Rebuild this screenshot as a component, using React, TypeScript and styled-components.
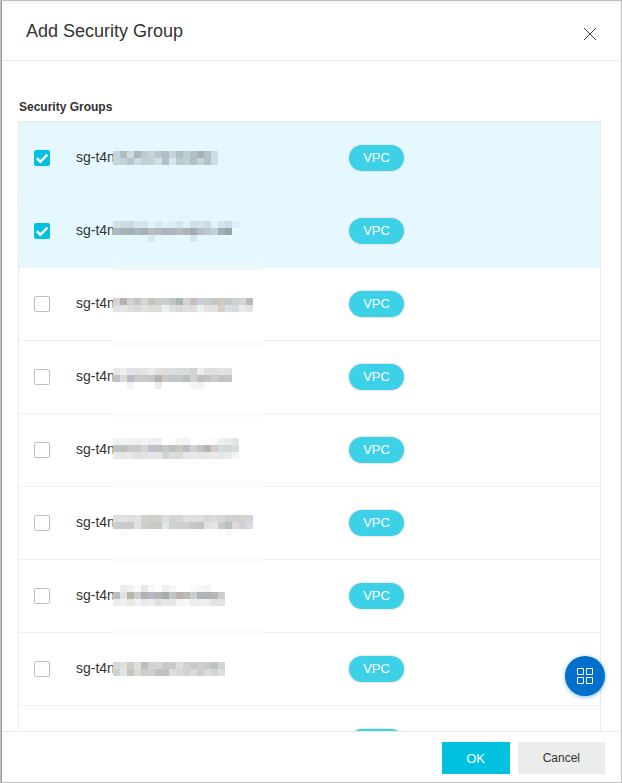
import React, { useState } from 'react';
import styled, { createGlobalStyle } from 'styled-components';

const GlobalStyle = createGlobalStyle`
  *, *::before, *::after { box-sizing: border-box; }
  body {
    margin: 0;
    background: #fff;
    color: #333;
    font-family: "Liberation Sans", Arial, Helvetica, sans-serif;
    font-size: 14px;
  }
`;

const Dialog = styled.section`
  display: flex;
  flex-direction: column;
  height: 100vh;
  background: #fff;
  border: 1px solid #c0c0c0;
  box-shadow: inset 1px 0 0 #9c9c9c, inset 0 2px 3px #f1f1f1;
  padding-left: 1px;
`;

const Header = styled.header`
  display: flex;
  align-items: center;
  justify-content: space-between;
  flex: none;
  height: 60px;
  padding: 0 21px 0 24px;
  border-bottom: 1px solid #ebebeb;
`;

const Title = styled.h1`
  margin: 0;
  font-size: 18px;
  line-height: 24px;
  font-weight: 400;
`;

const CloseButton = styled.button`
  display: flex;
  margin-top: 6px;
  padding: 0;
  border: 0;
  background: none;
  color: #444;
  cursor: pointer;
`;

const Body = styled.main`
  flex: 1;
  min-height: 0;
  overflow-y: auto;
  scrollbar-width: none;
  padding: 36px 20px 0 16px;
`;

const SectionTitle = styled.h2`
  margin: 0;
  padding: 0 1px 4px;
  font-size: 12px;
  line-height: 20px;
  font-weight: 700;
`;

const GroupTable = styled.table`
  width: 100%;
  table-layout: fixed;
  border: 1px solid #ebebeb;
  border-spacing: 0;
`;

const CheckColumn = styled.col`
  width: 57px;
`;

const NameColumn = styled.col`
  width: 47%;
`;

const Row = styled.tr<{ $selected: boolean }>`
  background: ${(p) => (p.$selected ? '#e5f8ff' : '#fff')};
`;

const Cell = styled.td`
  height: 73px;
  padding: 0;
  border-bottom: 1px solid #f2f2f2;
  vertical-align: middle;
`;

const CheckLabel = styled.label`
  position: relative;
  display: flex;
  width: 16px;
  margin-left: 15px;
`;

const CheckInput = styled.input`
  appearance: none;
  width: 16px;
  height: 16px;
  margin: 0;
  border: 1px solid #bfbfbf;
  border-radius: 2px;
  background: #fff;
  cursor: pointer;

  &:checked {
    border-color: #00c1de;
    background: #00c1de;
  }
`;

const Tick = styled.svg`
  position: absolute;
  inset: 0;
  pointer-events: none;
`;

const NameLine = styled.div`
  display: flex;
  align-items: center;
  height: 72px;
`;

const GroupId = styled.span`
  width: 37px;
  padding-bottom: 2px;
  white-space: nowrap;
  line-height: 20px;
`;

const Mosaic = styled.svg`
  position: relative;
  display: block;
  flex: none;
  overflow: visible;
  pointer-events: none;
`;

const Tag = styled.span`
  display: block;
  width: 55px;
  height: 26px;
  border-radius: 13px;
  background: #3dd1e7;
  box-shadow: 0 0 1px 1px #e4e8e8;
  color: #fff;
  font-size: 13px;
  line-height: 26px;
  text-align: center;
`;

const Footer = styled.footer`
  display: flex;
  flex: none;
  justify-content: flex-end;
  gap: 8px;
  padding: 10px 16px 8px;
  border-top: 1px solid #ebebeb;
`;

const ActionButton = styled.button<{ $primary?: boolean }>`
  min-width: 68px;
  height: 32px;
  padding: 0 ${(p) => (p.$primary ? '24px' : '25px')};
  border: 0;
  background: ${(p) => (p.$primary ? '#00c1de' : '#eaedec')};
  color: ${(p) => (p.$primary ? '#fff' : '#333')};
  font-family: inherit;
  font-size: ${(p) => (p.$primary ? '13px' : '12px')};
  cursor: pointer;
`;

const FloatingButton = styled.button`
  position: fixed;
  right: 17px;
  bottom: 87px;
  display: flex;
  align-items: center;
  justify-content: center;
  width: 40px;
  height: 40px;
  padding: 0;
  border: 0;
  border-radius: 50%;
  background: #0070cc;
  box-shadow: 0 1px 4px rgba(0, 112, 204, 0.5);
  color: #fff;
  cursor: pointer;
`;

type Mask = {
  top: number;
  lines: string[];
  band?: { y: number; color: string };
};

type Group = { id: string; selected: boolean; mask?: Mask };

const CELL = 7;

/* Each mask line lists one colour per tile; "-" leaves a tile empty. */
const groups: Group[] = [
  {
    id: 'sg-t4n',
    selected: true,
    mask: {
      top: 29,
      lines: [
        'c1d6de adbdc2 cbdce4 abb9be bdcbd1 c5d4d9 b7c8c8 b2bec8 c5d0d7 adc0c5 bccdd1 b1bfc6 a4b3b7 b2c4c4 cddde4',
        'c1d6de c2d3d6 b7c6cd cbdce2 c3d2d5 c3d2d5 cfe1e8 b3bfca d7e6ee b7cbcd bfd1d5 afbfc4 c3d4d9 b2c4c4 cddde4',
      ],
      band: { y: 71, color: '#e6f7fd' },
    },
  },
  {
    id: 'sg-t4n',
    selected: true,
    mask: {
      top: 26,
      lines: [
        'd1e2e8 cddce2 c9d9df d7e7ed d5e5eb e1f2f8 d7e8ee e0f1f7 dceef4 d3e6eb e0f3fa d0e0e5 d3e3e9 ccdce1 e0f3fb d3e4ea cddde3 dceef6',
        'a5bdca a9b3b6 a5b1b5 a7bac4 a8b1b2 b0c2c8 b0bcbd a6b5bf adb7b9 b1bdbf a9b6b9 a6abad abc0ca c0c6cd b9d5e1 a2b1b4 93a5a5',
        '- - - - - d7e8ee - - - - - d7e7ed',
      ],
      band: { y: 68, color: '#edf8fb' },
    },
  },
  {
    id: 'sg-t4n',
    selected: false,
    mask: {
      top: 30,
      lines: [
        'd0d4d7 b5afb1 d1d1d1 c3c3c8 d6d6d8 c3c4bf d0cbc7 c9ced3 c3c6c4 adb6b4 d4d4d5 c3bebb c9ced4 c9cdcd c3c7c7 d1c8c2 c5c9cb cdd1cf d0d5d6 babbb9',
        'dfe0e6 e3e4e3 dddddb d9dad9 e2e2e1 dfdddc e0dcdc e9f1f1 dfdfdf d7d8d7 dedfe1 e1dddd e8f1f0 e2e3e1 e1e1e2 d4cdc9 dadee3 d6dada e9e9e7 e4e4e5',
      ],
      band: { y: 72, color: '#fcfcfc' },
    },
  },
  {
    id: 'sg-t4n',
    selected: false,
    mask: {
      top: 27,
      lines: [
        'e7e8e8 efeee8 dfe2eb e0e0df e2e3e3 e9e9e8 e1e2dd dfdcd6 d8dddd dadbdd d9dada d1d2d1 edece7 dfdfde dbdfde e3e3e5 dfe0e4',
        'bdc4cb dfdbd4 b6bdc7 c8cbca c8c9c8 c5c7c4 afb4b0 cdc7bf bdc6c9 c2c8cb b8c0bd d5d1cc bdc2c1 c4c4c3 cbcecc c3c3c1 c4c7ca',
        '- - f4f4f5 - - - ebecea - - - - f5f5f5 eff3f3',
      ],
      band: { y: 69, color: '#fcfcfc' },
    },
  },
  {
    id: 'sg-t4n',
    selected: false,
    mask: {
      top: 24,
      lines: [
        'f2f2f2 f3f3f3 f1f2f1 eef0ef f2f3f3 f0f0f3 eff0f1 - - f4f4f4 f2f3f4 - - - fafafa eef1f0 e9ecea e3e5e6',
        'bac5cb bdc0bd c8cbc9 caccca d4d6d0 bfc2cc c0bcbf c4c9cc bcc1bf cbc7c1 b8bec4 cfd2d1 c1c4c1 b0b6b5 d4ccc8 d1dce0 d5d8d9 d8dcdc',
        'e8e9e9 e7e8e6 e8e8e8 e0e1e0 e1e2e1 e2e6e9 e3e5e7 d1d3d2 dededc d8dad9 e6e7ea edeae5 e6e6e8 e6e6ea eaeae8 e4e6e8 e6eaea f3f3f3',
      ],
      band: { y: 66, color: '#fcfcfc' },
    },
  },
  {
    id: 'sg-t4n',
    selected: false,
    mask: {
      top: 28,
      lines: [
        'dce0e2 e1e1e4 dededf e2e2e3 d1d2cf cdcdcb d3d0cc dbdce0 d0d4d5 d6d8d8 dfe0df dfdfdf dddfe0 d3d9d7 dcdadd d4d9d5 cdd1cd d1d2cf d5d2cb cdd5dd',
        'c8ced5 cacacd cacbca dfe0df cccecc cacac9 cac6c1 dfe7e8 ced1d0 cbd0cb cfcfcf c4c7c5 c2c4c2 dbe2df e4e3e6 c8cbc9 b8c0bb ddd9d6 d0d0d4 dadbe0',
        '- fafafa - - - - - - - - - - - - - - fafafa',
      ],
      band: { y: 70, color: '#fcfcfc' },
    },
  },
  {
    id: 'sg-t4n',
    selected: false,
    mask: {
      top: 25,
      lines: [
        '- ebebea f1f1f1 fcfcfa e8e8e8 f8f8f8 - efefec f7f7f7 - - fbfbfb f7f7f7 f2f3f3',
        'b7c0c6 dfe3e2 bab5af ccd0cd b4b3b1 b9b8c2 b1b7b4 a7adac c3c4c5 b9b4b2 bdbab0 c5cfcd b0b3bb abb4b6 b8b6b9 cecece',
        'ececf0 efefee e8e8e1 f0f0ef e6eaef ececed dfe1de e4e6e8 e4e6e9 f4f4f4 f9f9f8 ececed eeeeee f1ece9 e1e2e4 e1e4e6',
      ],
      band: { y: 67, color: '#fcfcfc' },
    },
  },
  {
    id: 'sg-t4n',
    selected: false,
    mask: {
      top: 29,
      lines: [
        'd3d8dc dfe1dd cccdca dfe0dd bdbfbb d2d3d7 d4d4d9 c7cac9 cbcaca dededf d0d1d3 c5c9c8 cbcecd c6c9c5 bfc2c0 d0d5d9',
        'ccd4d8 e3e6e4 c3c6c0 dadbd3 cdcdce ceced3 c0c2bf c0c2bf dcdddf d7d8d6 cfd5d6 d9dadd d0ccca d9dadc d4d5d4 dcdfe1',
      ],
    },
  },
  { id: 'sg-t4n', selected: false },
];

function RedactedTail({ mask }: { mask: Mask }) {
  return (
    <Mosaic width="149" height="72" viewBox="0 0 149 72" shapeRendering="crispEdges" aria-hidden="true">
      {mask.band && <rect x={0} y={mask.band.y} width={149} height={CELL} fill={mask.band.color} />}
      {mask.lines.map((line, r) =>
        line.split(' ').map((color, c) =>
          color === '-' ? null : (
            <rect
              key={`${r}-${c}`}
              x={c * CELL}
              y={mask.top + r * CELL}
              width={CELL}
              height={CELL}
              fill={`#${color}`}
            />
          ),
        ),
      )}
    </Mosaic>
  );
}

export default function App() {
  const [selected, setSelected] = useState(groups.map((g) => g.selected));
  const toggle = (index: number) =>
    setSelected((current) => current.map((value, i) => (i === index ? !value : value)));

  return (
    <>
      <GlobalStyle />
      <Dialog role="dialog" aria-labelledby="dialog-title">
        <Header>
          <Title id="dialog-title">Add Security Group</Title>
          <CloseButton type="button" aria-label="Close">
            <svg width="20" height="20" viewBox="0 0 20 20" fill="none" stroke="currentColor">
              <path d="M4 4 L16 16 M16 4 L4 16" />
            </svg>
          </CloseButton>
        </Header>
        <Body>
          <SectionTitle id="groups-title">Security Groups</SectionTitle>
          <GroupTable aria-labelledby="groups-title">
            <colgroup>
              <CheckColumn />
              <NameColumn />
              <col />
            </colgroup>
            <tbody>
              {groups.map((group, i) => (
                <Row key={i} $selected={selected[i]}>
                  <Cell>
                    <CheckLabel>
                      <CheckInput
                        type="checkbox"
                        checked={selected[i]}
                        onChange={() => toggle(i)}
                        aria-labelledby={`group-${i}`}
                      />
                      {selected[i] && (
                        <Tick width="16" height="16" viewBox="0 0 16 16" fill="none" stroke="#fff" strokeWidth="2.4">
                          <path d="M2.800 8.200 L6.300 11.700 L13.500 4.700" />
                        </Tick>
                      )}
                    </CheckLabel>
                  </Cell>
                  <Cell>
                    <NameLine>
                      <GroupId id={`group-${i}`}>{group.id}</GroupId>
                      {group.mask && <RedactedTail mask={group.mask} />}
                    </NameLine>
                  </Cell>
                  <Cell>
                    <Tag>VPC</Tag>
                  </Cell>
                </Row>
              ))}
            </tbody>
          </GroupTable>
        </Body>
        <Footer>
          <ActionButton type="button" $primary>
            OK
          </ActionButton>
          <ActionButton type="button">Cancel</ActionButton>
        </Footer>
      </Dialog>
      <FloatingButton type="button" aria-label="Open shortcuts">
        <svg width="16" height="16" viewBox="0 0 16 16" fill="none" stroke="currentColor">
          <path d="M.5 .5h6v6h-6z M9.500 .5h6v6h-6z M.5 9.500h6v6h-6z M9.500 9.500h6v6h-6z" />
        </svg>
      </FloatingButton>
    </>
  );
}
